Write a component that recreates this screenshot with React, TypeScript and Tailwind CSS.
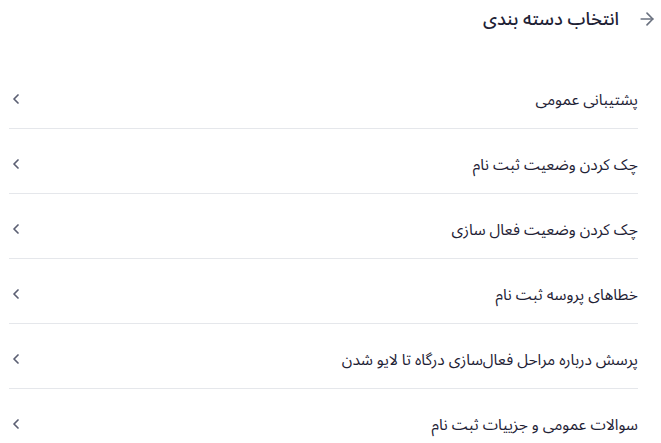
import React from "react";

const items = [
  "پشتیبانی عمومی",
  "چک کردن وضعیت ثبت نام",
  "چک کردن وضعیت فعال سازی",
  "خطاهای پروسه ثبت نام",
  "پرسش درباره مراحل فعال\u200Cسازی درگاه تا لایو شدن",
  "سوالات عمومی و جزییات ثبت نام",
];

export default function App() {
  return (
    <div dir="rtl" className="w-[661px] h-[443px] overflow-hidden bg-white text-[#1e2235]" style={{ fontFamily: '"Noto Sans Arabic", "DejaVu Sans", sans-serif' }}>
      <div className="flex items-center gap-[18px] pr-[4px] h-[37px]">
        <svg width="20" height="20" viewBox="0 0 24 24" fill="none" stroke="#6b7280" strokeWidth="2" strokeLinecap="round" strokeLinejoin="round">
          <path d="M5 12h14" />
          <path d="M12 5l7 7-7 7" />
        </svg>
        <span className="text-[18px] leading-[24px] font-medium">انتخاب دسته بندی</span>
      </div>
      <div className="mt-[27px] mr-[23px] ml-[9px]">
        {items.map((t, i) => (
          <div key={i} className={`flex items-center justify-between pt-[25px] pb-[17px] ${i < items.length - 1 ? "border-b border-[#e5e7eb]" : ""}`}>
            <span className="text-[15.5px] leading-[22px]">{t}</span>
            <svg width="16" height="16" viewBox="0 0 24 24" fill="none" stroke="#5b5f73" strokeWidth="2.6" strokeLinecap="round" strokeLinejoin="round" className="ml-[-1px] mb-[3px]">
              <path d="M15 6l-6 6 6 6" />
            </svg>
          </div>
        ))}
      </div>
    </div>
  );
}
